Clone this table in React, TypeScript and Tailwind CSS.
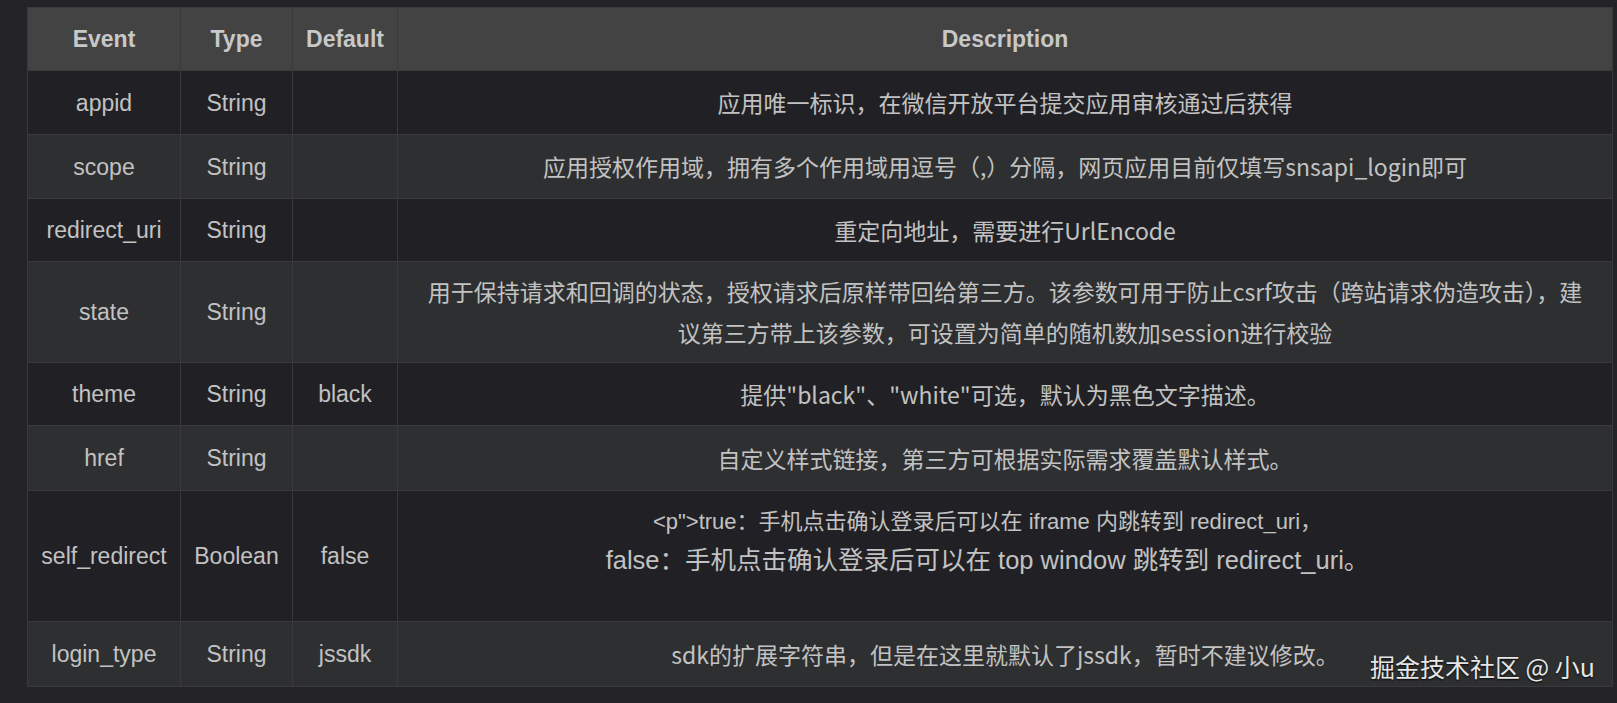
import React from "react";

type Row = {
  event: string;
  type: string;
  def: string;
  desc: React.ReactNode;
  h: string;
};

const ROWS: Row[] = [
  { event: "appid", type: "String", def: "", desc: "应用唯一标识，在微信开放平台提交应用审核通过后获得", h: "h-[64px]" },
  { event: "scope", type: "String", def: "", desc: "应用授权作用域，拥有多个作用域用逗号（,）分隔，网页应用目前仅填写snsapi_login即可", h: "h-[64px]" },
  { event: "redirect_uri", type: "String", def: "", desc: "重定向地址，需要进行UrlEncode", h: "h-[63px]" },
  {
    event: "state",
    type: "String",
    def: "",
    desc: (
      <>
        用于保持请求和回调的状态，授权请求后原样带回给第三方。该参数可用于防止csrf攻击（跨站请求伪造攻击），建
        <br />
        议第三方带上该参数，可设置为简单的随机数加session进行校验
      </>
    ),
    h: "h-[101px]",
  },
  { event: "theme", type: "String", def: "black", desc: "提供\"black\"、\"white\"可选，默认为黑色文字描述。", h: "h-[63px]" },
  { event: "href", type: "String", def: "", desc: "自定义样式链接，第三方可根据实际需求覆盖默认样式。", h: "h-[65px]" },
  { event: "self_redirect", type: "Boolean", def: "false", desc: null, h: "h-[131px]" },
  { event: "login_type", type: "String", def: "jssdk", desc: "sdk的扩展字符串，但是在这里就默认了jssdk，暂时不建议修改。", h: "h-[65px]" },
];

const cell = "border border-[#3a3a3d] text-center align-middle px-[13px]";

export default function App() {
  return (
    <div className="relative h-[703px] w-full overflow-hidden bg-[#242427] pt-[7px] pl-[27px] font-['Liberation_Sans','Noto_Sans_CJK_SC',sans-serif] text-[23px] text-[#c2c2c2]">
      <table className="w-[1586px] table-fixed border-collapse">
        <colgroup>
          <col className="w-[153px]" />
          <col className="w-[112px]" />
          <col className="w-[105px]" />
          <col />
        </colgroup>
        <thead>
          <tr className="h-[63px] bg-[#434343] font-bold text-[#c8c8c8]">
            <th className={cell}>Event</th>
            <th className={cell}>Type</th>
            <th className={cell}>Default</th>
            <th className={cell}>Description</th>
          </tr>
        </thead>
        <tbody>
          {ROWS.map((r, i) => (
            <tr key={r.event} className={`${r.h} ${i % 2 === 0 ? "bg-[#212125]" : "bg-[#2e2f31]"}`}>
              <td className={`${cell} leading-[40px]`}>{r.event}</td>
              <td className={`${cell} leading-[40px]`}>{r.type}</td>
              <td className={`${cell} leading-[40px]`}>{r.def}</td>
              {r.desc === null ? (
                <td className="border border-[#3a3a3d] pl-[13px] pr-[48px] pt-[11px] text-center align-top whitespace-nowrap">
                  <div className="text-[22px] leading-[40px]">
                    &lt;p"&gt;true：手机点击确认登录后可以在 iframe 内跳转到 redirect_uri，
                  </div>
                  <p className="text-[25.5px] leading-[36px]">
                    false：手机点击确认登录后可以在 top window 跳转到 redirect_uri。
                  </p>
                </td>
              ) : (
                <td className={`${cell} whitespace-nowrap font-['Noto_Sans_CJK_SC',sans-serif] leading-[41px]`}>
                  {r.desc}
                </td>
              )}
            </tr>
          ))}
        </tbody>
      </table>

      {/* watermark */}
      <div className="absolute right-[22px] top-[650px] font-['Noto_Sans_CJK_SC',sans-serif] text-[25px] leading-[32px] text-[#e6e6e6] [text-shadow:0_1px_2px_rgba(0,0,0,0.9)]">
        掘金技术社区 @ 小u
      </div>
    </div>
  );
}
